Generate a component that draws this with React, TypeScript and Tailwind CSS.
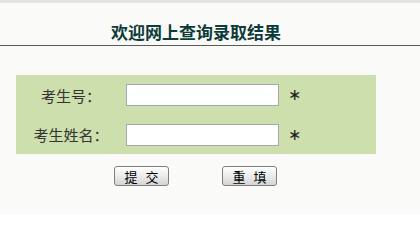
import React from "react";

const cjk = { fontFamily: '"Noto Sans CJK SC", "Noto Sans", sans-serif' };

function Row({ label, h }: { label: string; h: string }) {
  return (
    <div className={`flex items-center ${h}`}>
      <div className="w-[110px] text-center text-[15px] leading-[15px] text-[#333333]" style={cjk}>
        {label}
      </div>
      <input
        type="text"
        className="block h-[22px] w-[153px] border border-[#a5a9b0] bg-white outline-none"
      />
      <span
        className="ml-[9px] text-[16px] leading-[16px] text-[#222222]"
        style={{ fontFamily: '"DejaVu Sans", sans-serif' }}
      >
        ∗
      </span>
    </div>
  );
}

function Btn({ a, b }: { a: string; b: string }) {
  return (
    <button
      type="button"
      className="flex h-[20px] w-[55px] items-center justify-center gap-[8px] rounded-[3px] border border-[#808080] bg-gradient-to-b from-white via-[#ececec] to-[#d4d4d4] text-[13px] leading-[13px] text-black"
      style={cjk}
    >
      <span>{a}</span>
      <span>{b}</span>
    </button>
  );
}

export default function App() {
  return (
    <div className="h-[214px] w-[420px] overflow-hidden bg-[#fafaf8]">
      <div className="h-[3px] bg-[#e1e5e0]" />
      <div className="w-[360px] ml-[16px] pt-[20px] pb-[5px] text-center">
        <div
          className="text-[17px] font-bold leading-[17px] text-[#0d3b38]"
          style={cjk}
        >
          欢迎网上查询录取结果
        </div>
      </div>
      <div className="h-px bg-[#5a5a5a]" />
      <div className="ml-[16px] mt-[29px] w-[360px] bg-[#cddfad]">
        <Row label="考生号：" h="h-[40px]" />
        <Row label="考生姓名：" h="h-[39px]" />
      </div>
      <div className="ml-[114px] mt-[12px] flex gap-[53px]">
        <Btn a="提" b="交" />
        <Btn a="重" b="填" />
      </div>
    </div>
  );
}
